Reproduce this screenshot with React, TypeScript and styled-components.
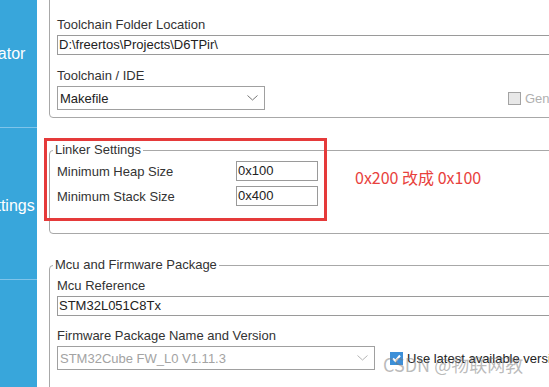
import React, { ReactElement } from 'react';
import styled, { createGlobalStyle } from 'styled-components';

// Global
const GlobalStyle = createGlobalStyle`
  html, body {
    margin: 0;
    width: 549px;
    height: 387px;
    overflow: hidden;
    background: #fff;
    font-family: 'Liberation Sans', Arial, sans-serif;
  }
`;

// Styled Components
const Page = styled.div`
  position: relative;
  display: flex;
  width: 549px;
  height: 387px;
  overflow: hidden;
  background: #fff;
`;

const Sidebar = styled.nav`
  width: 37px;
  flex-shrink: 0;
  overflow: hidden;
  background: #38a6db;
`;

const SidebarTrack = styled.div`
  width: 138px;
  margin-left: -101px;
  margin-top: -24px;
  display: flex;
  flex-direction: column;
`;

const SideTab = styled.div`
  height: 152px;
  padding-top: 4px;
  box-sizing: border-box;
  display: flex;
  align-items: center;
  justify-content: center;
  border-bottom: 1px solid #7fc4ea;
  color: #fff;
  font-size: 16px;
  white-space: nowrap;
`;

const Content = styled.main`
  flex: 1;
  min-width: 0;
  padding-left: 12px;
  display: flex;
  flex-direction: column;
`;

const Annotated = styled.div<{ $gap: number }>`
  position: relative;
  margin-top: ${({ $gap }) => $gap}px;
`;

const Group = styled.fieldset<{ $pad: string; $top?: number }>`
  margin: ${({ $top }) => $top ?? 0}px -30px 0 0;
  padding: ${({ $pad }) => $pad};
  min-width: 0;
  border: 1px solid #a8a8a8;
  border-radius: 4px;
`;

const Legend = styled.legend`
  margin-left: -4px;
  padding: 0 2px;
  font-size: 13px;
  line-height: 16px;
  color: #333;
`;

const Label = styled.div<{ $gap?: number }>`
  margin-top: ${({ $gap }) => $gap ?? 0}px;
  font-size: 13px;
  line-height: 16px;
  color: #333;
`;

const TextBox = styled.div<{ $width?: number; $flush?: boolean }>`
  margin-top: ${({ $flush }) => ($flush ? 0 : 2)}px;
  width: ${({ $width }) => ($width ? `${$width}px` : '100%')};
  height: 20px;
  box-sizing: border-box;
  padding: 0 1px;
  border: 1px solid #9a9a9a;
  background: #fff;
  font-size: 13px;
  line-height: 18px;
  color: #222;
  white-space: nowrap;
  overflow: hidden;
`;

const ControlRow = styled.div`
  margin-top: 2px;
  display: flex;
  align-items: center;
`;

const Select = styled.div<{ $width: number; $disabled?: boolean }>`
  width: ${({ $width }) => $width}px;
  height: 24px;
  flex-shrink: 0;
  box-sizing: border-box;
  padding: 0 6px 0 2px;
  display: flex;
  align-items: center;
  justify-content: space-between;
  border: 1px solid #a0a0a0;
  background: #fff;
  font-size: 13px;
  color: ${({ $disabled }) => ($disabled ? '#a3a3a3' : '#222')};
`;

const CheckOption = styled.label<{ $offset: number; $muted?: boolean }>`
  margin-left: ${({ $offset }) => $offset}px;
  flex-shrink: 0;
  display: flex;
  align-items: center;
  gap: 4px;
  font-size: 13px;
  color: ${({ $muted }) => ($muted ? '#b0b0b0' : '#222')};
  white-space: nowrap;
`;

const Box = styled.span<{ $checked?: boolean }>`
  width: 13px;
  height: 13px;
  flex-shrink: 0;
  box-sizing: border-box;
  display: flex;
  align-items: center;
  justify-content: center;
  border: 1px solid ${({ $checked }) => ($checked ? '#3c8fd8' : '#a3a3a3')};
  background: ${({ $checked }) => ($checked ? '#3c8fd8' : '#e8e8e8')};
`;

const LinkerBody = styled.div`
  display: flex;
  align-items: flex-start;
`;

const Fields = styled.div`
  width: 261px;
  display: flex;
  flex-direction: column;
  gap: 5px;
`;

const FieldRow = styled.div`
  height: 20px;
  display: flex;
  align-items: center;
`;

const FieldLabel = styled.span`
  width: 179px;
  font-size: 13px;
  color: #333;
`;

const Note = styled.div`
  margin: 6px 0 0 37px;
  font-family: 'Noto Sans CJK SC', 'Liberation Sans', sans-serif;
  font-size: 16px;
  line-height: 20px;
  color: #e8413c;
  white-space: nowrap;
`;

const Highlight = styled.div`
  position: absolute;
  left: -5px;
  top: -4px;
  width: 283px;
  height: 83px;
  box-sizing: border-box;
  border: 3px solid #e53a3a;
  pointer-events: none;
`;

const Watermark = styled.div`
  position: absolute;
  left: 383px;
  top: 353px;
  font-family: 'Noto Sans CJK SC', 'Liberation Sans', sans-serif;
  font-size: 18px;
  line-height: 22px;
  color: rgba(120, 120, 120, 0.5);
  white-space: nowrap;
  pointer-events: none;
`;

const Chevron = ({ color }: { color: string }): ReactElement => (
  <svg width="11" height="6" viewBox="0 0 11 6">
    <path d="M0.5 0.5 L5.5 5 L10.5 0.5" fill="none" stroke={color} strokeWidth="1" />
  </svg>
);

const Check = (): ReactElement => (
  <svg width="11" height="11" viewBox="0 0 11 11">
    <path d="M2 5.5 L4.5 8 L9 2.5" fill="none" stroke="#fff" strokeWidth="2" />
  </svg>
);

const App = (): ReactElement => (
  <Page>
    <GlobalStyle />
    <Sidebar>
      <SidebarTrack>
        <SideTab>Code Generator</SideTab>
        <SideTab>Advanced Settings</SideTab>
        <SideTab />
      </SidebarTrack>
    </Sidebar>

    <Content>
      <Group $pad="26px 7px 7px" $top={-10}>
        <Label>Toolchain Folder Location</Label>
        <TextBox>D:\freertos\Projects\D6TPir\</TextBox>
        <Label $gap={13}>Toolchain / IDE</Label>
        <ControlRow>
          <Select $width={208}>
            Makefile
            <Chevron color="#777" />
          </Select>
          <CheckOption $offset={243} $muted>
            <Box />
            Generate Under Root
          </CheckOption>
        </ControlRow>
      </Group>

      <Annotated $gap={24}>
        <Group $pad="3px 7px 27px">
          <Legend>Linker Settings</Legend>
          <LinkerBody>
            <Fields>
              <FieldRow>
                <FieldLabel>Minimum Heap Size</FieldLabel>
                <TextBox $width={82} $flush>0x100</TextBox>
              </FieldRow>
              <FieldRow>
                <FieldLabel>Minimum Stack Size</FieldLabel>
                <TextBox $width={82} $flush>0x400</TextBox>
              </FieldRow>
            </Fields>
            <Note>0x200 改成 0x100</Note>
          </LinkerBody>
        </Group>
        <Highlight />
      </Annotated>

      <Annotated $gap={23}>
        <Group $pad="5px 7px 30px">
          <Legend>Mcu and Firmware Package</Legend>
          <Label>Mcu Reference</Label>
          <TextBox>STM32L051C8Tx</TextBox>
          <Label $gap={12}>Firmware Package Name and Version</Label>
          <ControlRow>
            <Select $width={318} $disabled>
              STM32Cube FW_L0 V1.11.3
              <Chevron color="#b5b5b5" />
            </Select>
            <CheckOption $offset={15}>
              <Box $checked>
                <Check />
              </Box>
              Use latest available version
            </CheckOption>
          </ControlRow>
        </Group>
      </Annotated>
    </Content>

    <Watermark>CSDN @物联网教</Watermark>
  </Page>
);

export default App;
